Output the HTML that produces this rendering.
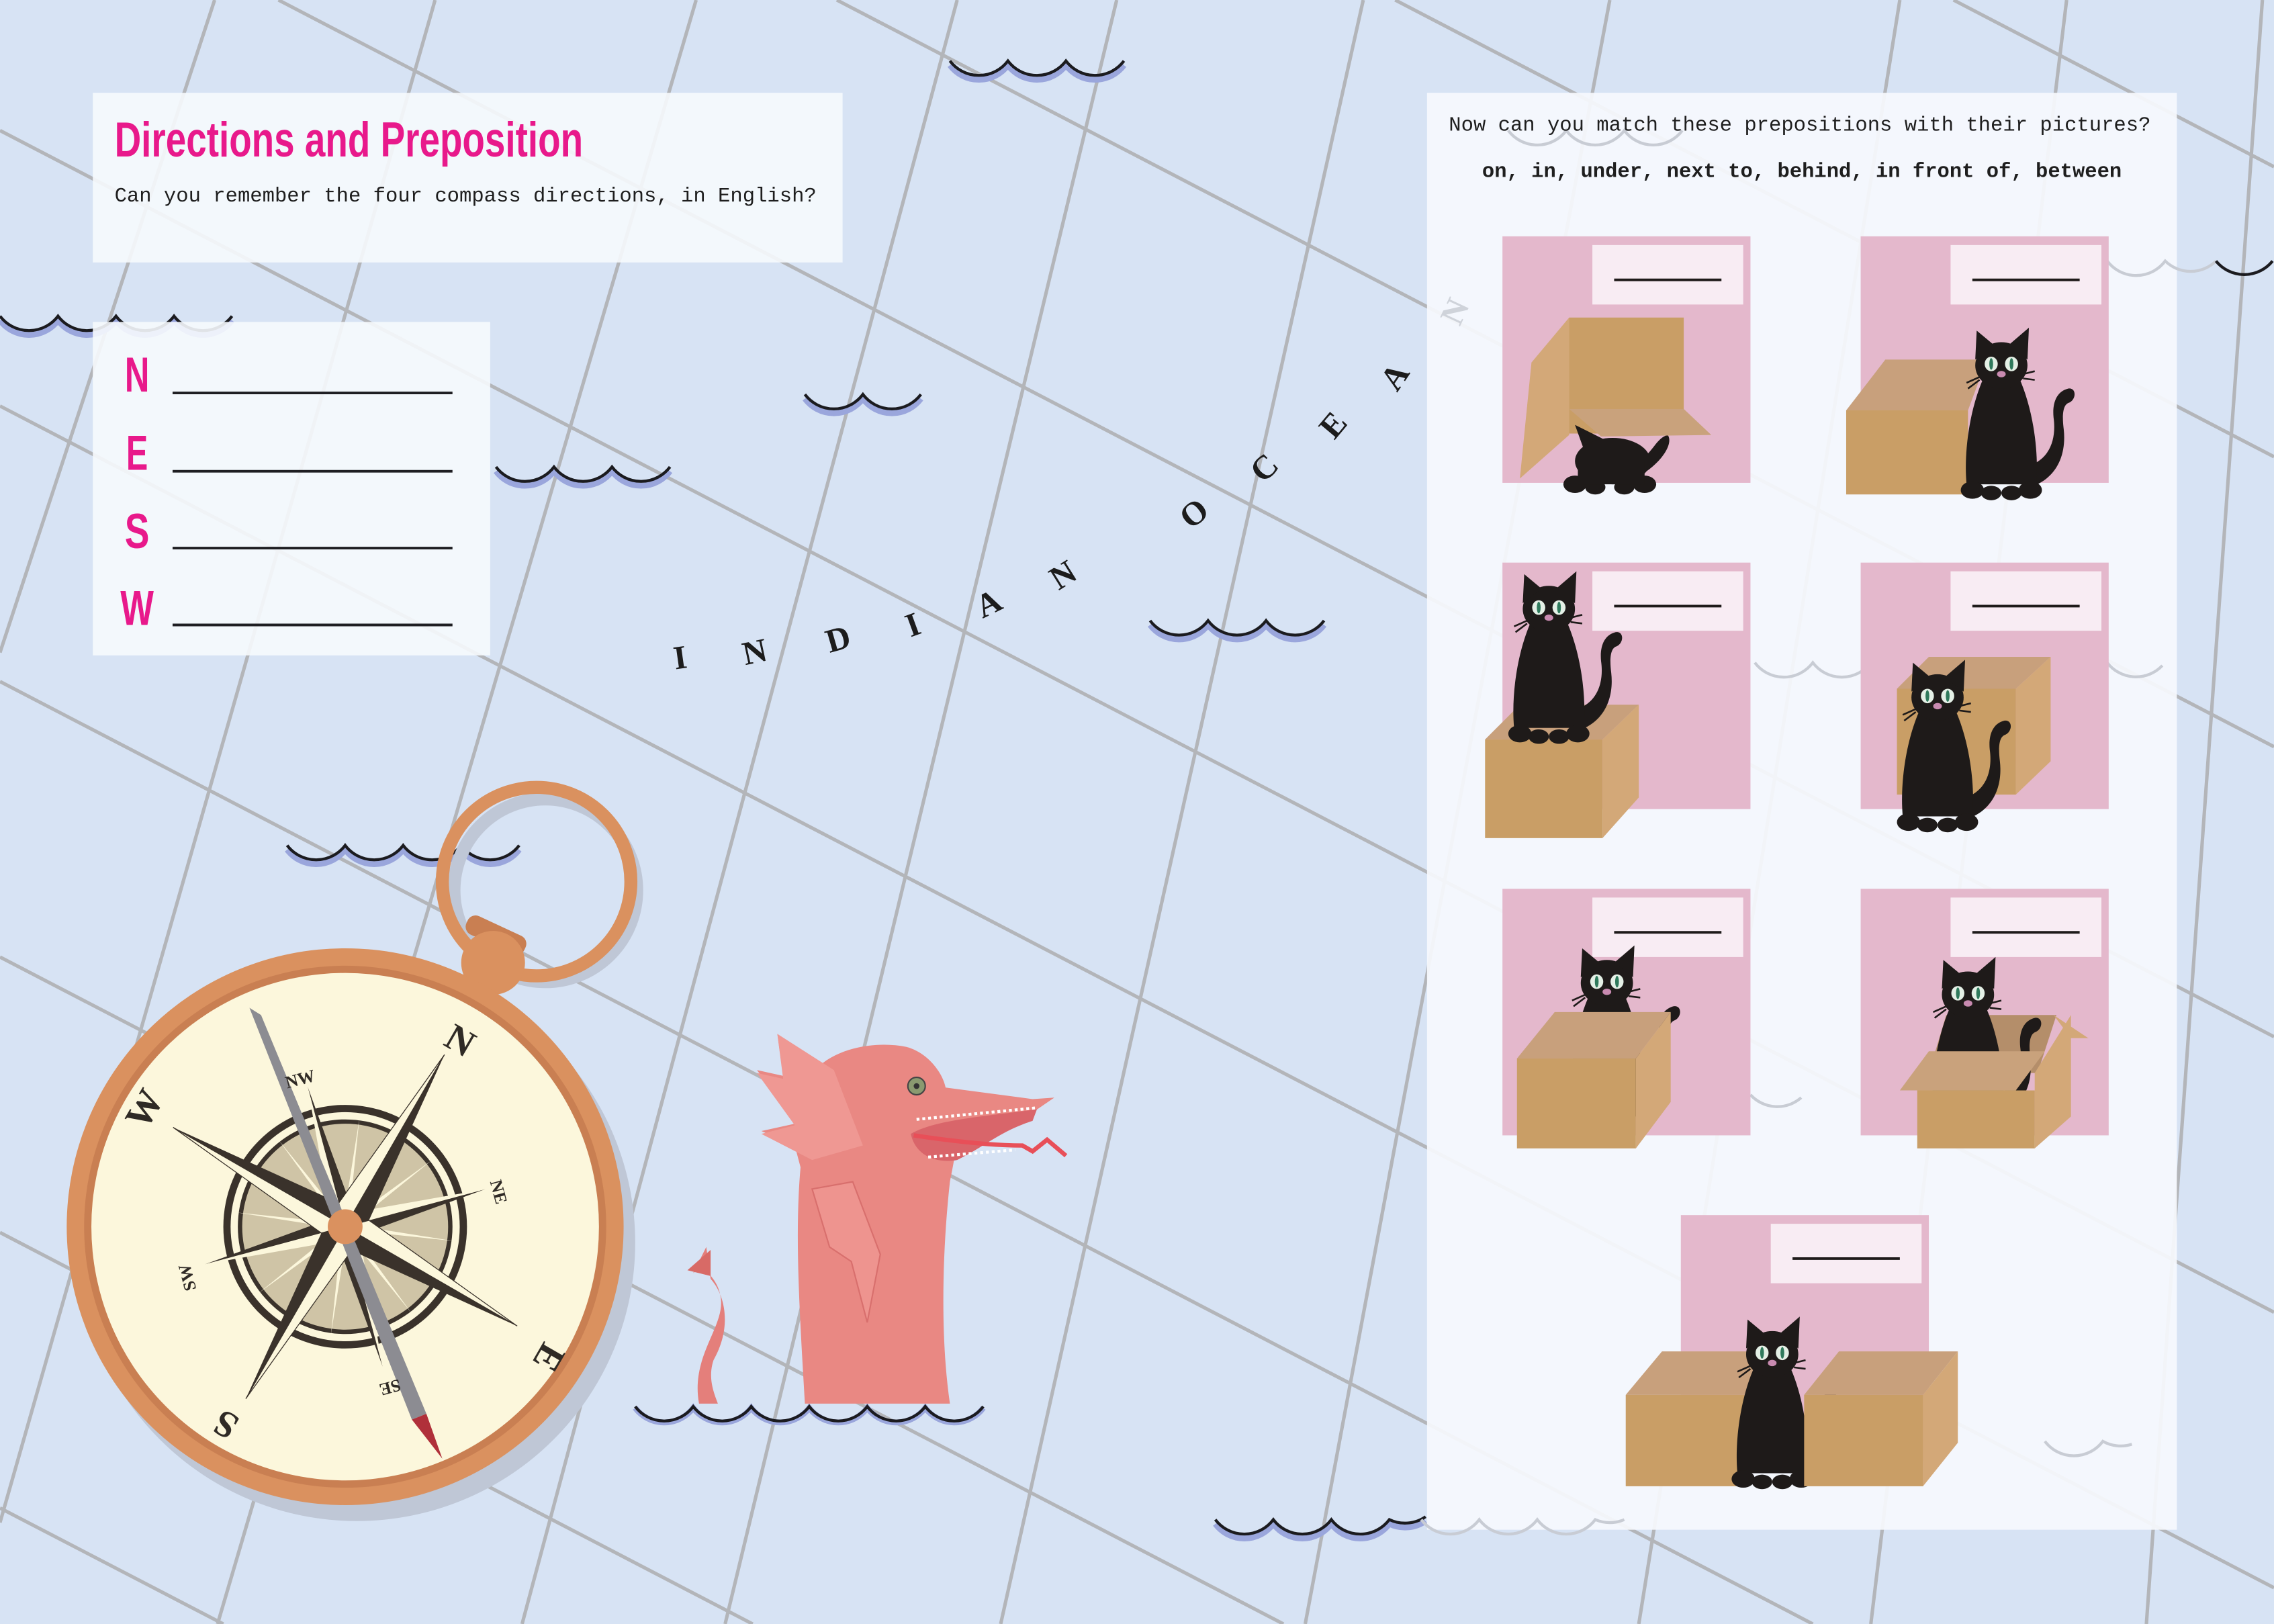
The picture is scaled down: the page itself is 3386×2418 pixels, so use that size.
<!DOCTYPE html>
<html><head><meta charset="utf-8">
<style>
html,body{margin:0;padding:0;background:#d7e3f4;width:3386px;height:2418px;overflow:hidden;}
svg{display:block;position:absolute;left:0;top:0;}
</style></head>
<body>
<svg width="3386" height="2418" viewBox="0 0 1568 1120" preserveAspectRatio="none" xmlns="http://www.w3.org/2000/svg" overflow="hidden">
<defs>
<g id="cat">
  <path d="M16,70 C34,66 38,50 36,36 C35,26 38,18 46,16 C52,15 52,24 46,26 C42,28 42,36 43,44 C45,62 38,78 20,84 Z" fill="#1e1a19"/>
  <path d="M-12,8 C-22,30 -26,60 -24,82 L24,82 C26,60 22,30 12,8 Z" fill="#1e1a19"/>
  <ellipse cx="-20" cy="86" rx="8" ry="6" fill="#1e1a19"/>
  <ellipse cx="-7" cy="88" rx="7" ry="5" fill="#1e1a19"/>
  <ellipse cx="7" cy="88" rx="7" ry="5" fill="#1e1a19"/>
  <ellipse cx="20" cy="86" rx="8" ry="6" fill="#1e1a19"/>
  <ellipse cx="0" cy="0" rx="18" ry="16" fill="#1e1a19"/>
  <polygon points="-18,-4 -17,-24 -5,-14" fill="#1e1a19"/>
  <polygon points="18,-4 19,-26 5,-14" fill="#1e1a19"/>
  <ellipse cx="-7" cy="-1" rx="4.5" ry="5" fill="#e4f0e6"/>
  <ellipse cx="7" cy="-1" rx="4.5" ry="5" fill="#e4f0e6"/>
  <ellipse cx="-7" cy="-1" rx="1.3" ry="4" fill="#2f7a5c"/>
  <ellipse cx="7" cy="-1" rx="1.3" ry="4" fill="#2f7a5c"/>
  <ellipse cx="0" cy="6" rx="3" ry="2.2" fill="#c88ab0"/>
  <g stroke="#1e1a19" stroke-width="1.2"><path d="M-15,8 L-24,12 M-15,10 L-23,16 M15,6 L23,4 M15,9 L23,10"/></g>
</g>
<g id="lbl">
  <rect x="0" y="0" width="104" height="41" fill="#f8ecf3"/>
  <line x1="15" y1="24" x2="89" y2="24" stroke="#1e1a19" stroke-width="1.8"/>
</g>
</defs>

<rect width="1568" height="1120" fill="#d7e3f4"/>

<g stroke="#b3b5b9" stroke-width="2.4" fill="none">
  <line x1="148" y1="0" x2="0" y2="450"/>
  <line x1="300" y1="0" x2="0" y2="1050"/>
  <line x1="480" y1="0" x2="150" y2="1120"/>
  <line x1="660" y1="0" x2="360" y2="1120"/>
  <line x1="770" y1="0" x2="500" y2="1120"/>
  <line x1="940" y1="0" x2="690" y2="1120"/>
  <line x1="1110" y1="0" x2="900" y2="1120"/>
  <line x1="1310" y1="0" x2="1130" y2="1120"/>
  <line x1="1425" y1="0" x2="1290" y2="1120"/>
  <line x1="1560" y1="0" x2="1480" y2="1120"/>
  <line x1="1347" y1="0" x2="1568" y2="115"/>
  <line x1="962" y1="0" x2="1568" y2="315"/>
  <line x1="577" y1="0" x2="1568" y2="515"/>
  <line x1="192" y1="0" x2="1568" y2="715"/>
  <line x1="0" y1="90" x2="1568" y2="905"/>
  <line x1="0" y1="280" x2="1568" y2="1095"/>
  <line x1="0" y1="470" x2="1250" y2="1120"/>
  <line x1="0" y1="660" x2="885" y2="1120"/>
  <line x1="0" y1="850" x2="519" y2="1120"/>
  <line x1="0" y1="1040" x2="154" y2="1120"/>
</g>

<g fill="none">
  <g stroke="#9aa6dc" stroke-width="4" transform="translate(0,3)">
    <path d="M655,42 a25 25 0 0 0 40 0 a25 25 0 0 0 40 0 a25 25 0 0 0 40 0"/>
    <path d="M0,218 a25 25 0 0 0 40 0 a25 25 0 0 0 40 0 a25 25 0 0 0 40 0 a25 25 0 0 0 40 0"/>
    <path d="M555,272 a25 25 0 0 0 40 0 a25 25 0 0 0 40 0"/>
    <path d="M342,322 a25 25 0 0 0 40 0 a25 25 0 0 0 40 0 a25 25 0 0 0 40 0"/>
    <path d="M793,428 a25 25 0 0 0 40 0 a25 25 0 0 0 40 0 a25 25 0 0 0 40 0"/>
    <path d="M198,583 a25 25 0 0 0 40 0 a25 25 0 0 0 40 0 a25 25 0 0 0 40 0 a25 25 0 0 0 40 0"/>
    <path d="M438,968 a25 25 0 0 0 40 0 a25 25 0 0 0 40 0 a25 25 0 0 0 40 0 a25 25 0 0 0 40 0 a25 25 0 0 0 40 0 a25 25 0 0 0 40 0"/>
    <path d="M838,1048 a25 25 0 0 0 40 0 a25 25 0 0 0 40 0 a25 25 0 0 0 40 0 a25 25 0 0 0 25 -2"/>
  </g>
  <g stroke="#1b1b1f" stroke-width="2">
    <path d="M655,42 a25 25 0 0 0 40 0 a25 25 0 0 0 40 0 a25 25 0 0 0 40 0"/>
    <path d="M0,218 a25 25 0 0 0 40 0 a25 25 0 0 0 40 0 a25 25 0 0 0 40 0 a25 25 0 0 0 40 0"/>
    <path d="M555,272 a25 25 0 0 0 40 0 a25 25 0 0 0 40 0"/>
    <path d="M342,322 a25 25 0 0 0 40 0 a25 25 0 0 0 40 0 a25 25 0 0 0 40 0"/>
    <path d="M793,428 a25 25 0 0 0 40 0 a25 25 0 0 0 40 0 a25 25 0 0 0 40 0"/>
    <path d="M198,583 a25 25 0 0 0 40 0 a25 25 0 0 0 40 0 a25 25 0 0 0 40 0 a25 25 0 0 0 40 0"/>
    <path d="M838,1048 a25 25 0 0 0 40 0 a25 25 0 0 0 40 0 a25 25 0 0 0 40 0 a25 25 0 0 0 25 -2"/>
  </g>
</g>

<rect x="64" y="64" width="517" height="117" fill="#f6f9fd" opacity="0.9"/>
<rect x="64" y="222" width="274" height="230" fill="#f6f9fd" opacity="0.9"/>
<text x="79" y="108" font-family="'Liberation Sans Narrow','Liberation Sans',sans-serif" font-weight="bold" font-size="34" fill="#e8198b" textLength="323" lengthAdjust="spacingAndGlyphs">Directions and Preposition</text>
<text x="79" y="139" font-family="'Liberation Mono',monospace" font-size="14" fill="#1e1e1e" textLength="484" lengthAdjust="spacingAndGlyphs">Can you remember the four compass directions, in English?</text>
<g font-family="'Liberation Sans Narrow','Liberation Sans',sans-serif" font-weight="bold" font-size="34" fill="#e8198b">
  <text x="86" y="270" textLength="17" lengthAdjust="spacingAndGlyphs">N</text>
  <text x="87" y="324" textLength="15" lengthAdjust="spacingAndGlyphs">E</text>
  <text x="86" y="378" textLength="17" lengthAdjust="spacingAndGlyphs">S</text>
  <text x="83" y="431" textLength="23" lengthAdjust="spacingAndGlyphs">W</text>
</g>
<g stroke="#1e1e22" stroke-width="1.8">
  <line x1="119" y1="271" x2="312" y2="271"/>
  <line x1="119" y1="325" x2="312" y2="325"/>
  <line x1="119" y1="378" x2="312" y2="378"/>
  <line x1="119" y1="431" x2="312" y2="431"/>
</g>

<g font-family="'Liberation Serif',serif" font-weight="bold" font-size="23" fill="#1c1c1c" text-anchor="middle">
  <text transform="translate(470,461) rotate(-8)">I</text>
  <text transform="translate(522,457) rotate(-12)">N</text>
  <text transform="translate(580,448) rotate(-16)">D</text>
  <text transform="translate(632,438) rotate(-20)">I</text>
  <text transform="translate(685,423) rotate(-26)">A</text>
  <text transform="translate(737,403) rotate(-32)">N</text>
  <text transform="translate(828,360) rotate(-38)">O</text>
  <text transform="translate(877,328) rotate(-44)">C</text>
  <text transform="translate(925,298) rotate(-50)">E</text>
  <text transform="translate(968,264) rotate(-56)">A</text>
</g>

<rect x="984" y="64" width="517" height="991" fill="#f6f9fd" opacity="0.93"/>
<g fill="none" stroke="#c8ccd4" stroke-width="2">
  <path d="M980,1048 a25 25 0 0 0 40 0 a25 25 0 0 0 40 0 a25 25 0 0 0 40 0 a25 25 0 0 0 20 0"/>
  <path d="M1453,180 a25 25 0 0 0 40 0 a25 25 0 0 0 35 0"/>
  <path d="M1210,457 a25 25 0 0 0 40 0 a25 25 0 0 0 40 0"/>
  <path d="M1453,457 a25 25 0 0 0 38 2"/>
  <path d="M1207,755 a25 25 0 0 0 35 2"/>
  <path d="M1410,994 a25 25 0 0 0 40 0 a25 25 0 0 0 20 2"/>
  <path d="M1040,90 a25 25 0 0 0 40 0 a25 25 0 0 0 40 0 a25 25 0 0 0 40 0"/>
</g>
<path d="M1528,180 a25 25 0 0 0 39 0" fill="none" stroke="#1b1b1f" stroke-width="2"/>
<text transform="translate(1010,218) rotate(-65)" font-family="'Liberation Serif',serif" font-weight="bold" font-size="23" fill="#cfd3da" text-anchor="middle">N</text>
<text x="999" y="90" font-family="'Liberation Mono',monospace" font-size="14" fill="#1e1e1e" textLength="484" lengthAdjust="spacingAndGlyphs">Now can you match these prepositions with their pictures?</text>
<text x="1022" y="122" font-family="'Liberation Mono',monospace" font-weight="bold" font-size="14" fill="#1e1e1e" textLength="441" lengthAdjust="spacingAndGlyphs">on, in, under, next to, behind, in front of, between</text>

<g fill="#e4b8cc">
  <rect x="1036" y="163" width="171" height="170"/>
  <rect x="1283" y="163" width="171" height="170"/>
  <rect x="1036" y="388" width="171" height="170"/>
  <rect x="1283" y="388" width="171" height="170"/>
  <rect x="1036" y="613" width="171" height="170"/>
  <rect x="1283" y="613" width="171" height="170"/>
  <rect x="1159" y="838" width="171" height="170"/>
</g>
<use href="#lbl" x="1098" y="169"/>
<use href="#lbl" x="1345" y="169"/>
<use href="#lbl" x="1098" y="394"/>
<use href="#lbl" x="1345" y="394"/>
<use href="#lbl" x="1098" y="619"/>
<use href="#lbl" x="1345" y="619"/>
<use href="#lbl" x="1221" y="844"/>

<polygon points="1056,250 1082,219 1082,300 1048,330" fill="#d3a878"/>
<rect x="1082" y="219" width="79" height="80" fill="#c99e66"/>
<g fill="#1e1a19">
  <polygon points="1086,293 1095,318 1110,305"/>
  <ellipse cx="1112" cy="318" rx="26" ry="16"/>
  <path d="M1130,318 C1140,312 1142,302 1150,300 C1154,306 1146,318 1134,326 Z"/>
  <ellipse cx="1086" cy="334" rx="8" ry="6"/><ellipse cx="1100" cy="336" rx="7" ry="5"/>
  <ellipse cx="1120" cy="336" rx="7" ry="5"/><ellipse cx="1134" cy="334" rx="8" ry="6"/>
  <rect x="1088" y="318" width="46" height="16"/>
</g>
<polygon points="1082,282 1161,282 1180,300 1104,301" fill="#c9a27c"/>

<polygon points="1273,283 1300,248 1370,248 1357,283" fill="#c8a07c"/>
<rect x="1273" y="283" width="84" height="58" fill="#c99e66"/>
<use href="#cat" x="1380" y="252"/>

<polygon points="1024,510 1048,486 1130,486 1105,510" fill="#c8a07c"/>
<polygon points="1105,510 1130,486 1130,550 1105,578" fill="#d3a878"/>
<rect x="1024" y="510" width="81" height="68" fill="#c99e66"/>
<use href="#cat" x="1068" y="420"/>

<polygon points="1308,475 1330,453 1414,453 1390,475" fill="#c8a07c"/>
<polygon points="1390,475 1414,453 1414,525 1390,548" fill="#d3a878"/>
<rect x="1308" y="475" width="82" height="73" fill="#c99e66"/>
<use href="#cat" x="1336" y="481"/>

<use href="#cat" x="1108" y="678"/>
<polygon points="1046,730 1072,698 1152,698 1128,730" fill="#c8a07c"/>
<polygon points="1128,730 1152,698 1152,760 1128,792" fill="#d3a878"/>
<rect x="1046" y="730" width="82" height="62" fill="#c99e66"/>

<polygon points="1330,740 1342,700 1418,700 1405,740" fill="#b48e6a"/>
<use href="#cat" x="1357" y="686"/>
<polygon points="1403,740 1428,700 1428,770 1403,792" fill="#d3a878"/>
<polygon points="1416,700 1440,716 1428,716" fill="#d3a878"/>
<polygon points="1310,752 1330,725 1410,725 1390,752" fill="#c9a27c"/>
<rect x="1322" y="752" width="81" height="40" fill="#c99e66"/>

<polygon points="1121,962 1146,932 1228,932 1203,962" fill="#c8a07c"/>
<rect x="1121" y="962" width="82" height="63" fill="#c99e66"/>
<use href="#cat" x="1222" y="934"/>
<polygon points="1244,962 1268,932 1350,932 1326,962" fill="#c8a07c"/>
<polygon points="1326,962 1350,932 1350,995 1326,1025" fill="#d3a878"/>
<rect x="1244" y="962" width="82" height="63" fill="#c99e66"/>

<circle cx="376" cy="614" r="63" fill="none" stroke="#bfc7d6" stroke-width="9"/>
<circle cx="370" cy="608" r="65" fill="none" stroke="#da915f" stroke-width="9"/>
<circle cx="246" cy="857" r="192" fill="#bfc7d6"/>
<rect x="320" y="638" width="44" height="14" rx="6" fill="#c97f52" transform="rotate(25 342 645)"/>
<circle cx="340" cy="664" r="22" fill="#da915f"/>
<circle cx="238" cy="846" r="192" fill="#da915f"/>
<circle cx="238" cy="846" r="180" fill="#c97f52"/>
<circle cx="238" cy="846" r="175" fill="#fcf7dc"/>
<g transform="translate(238,846)">
  <circle r="84" fill="#3a322b"/>
  <circle r="79" fill="#fcf7dc"/>
  <circle r="74" fill="#3a322b"/>
  <circle r="71" fill="#cfc4a6"/>
  <g transform="rotate(30)">
    <g>
      <polygon points="0,-75 2,0 -2,0" fill="#fcf7dc" transform="rotate(22.5)"/>
      <polygon points="0,-75 2,0 -2,0" fill="#fcf7dc" transform="rotate(67.5)"/>
      <polygon points="0,-75 2,0 -2,0" fill="#fcf7dc" transform="rotate(112.5)"/>
      <polygon points="0,-75 2,0 -2,0" fill="#fcf7dc" transform="rotate(157.5)"/>
      <polygon points="0,-75 2,0 -2,0" fill="#fcf7dc" transform="rotate(202.5)"/>
      <polygon points="0,-75 2,0 -2,0" fill="#fcf7dc" transform="rotate(247.5)"/>
      <polygon points="0,-75 2,0 -2,0" fill="#fcf7dc" transform="rotate(292.5)"/>
      <polygon points="0,-75 2,0 -2,0" fill="#fcf7dc" transform="rotate(337.5)"/>
    </g>
    <g>
      <g transform="rotate(45)"><polygon points="0,-100 8,-8 0,0" fill="#3a322b"/><polygon points="0,-100 -8,-8 0,0" fill="#fcf7dc"/></g>
      <g transform="rotate(135)"><polygon points="0,-100 8,-8 0,0" fill="#3a322b"/><polygon points="0,-100 -8,-8 0,0" fill="#fcf7dc"/></g>
      <g transform="rotate(225)"><polygon points="0,-100 8,-8 0,0" fill="#3a322b"/><polygon points="0,-100 -8,-8 0,0" fill="#fcf7dc"/></g>
      <g transform="rotate(315)"><polygon points="0,-100 8,-8 0,0" fill="#3a322b"/><polygon points="0,-100 -8,-8 0,0" fill="#fcf7dc"/></g>
    </g>
    <g>
      <g><polygon points="0,-137 12,-12 0,0" fill="#3a322b"/><polygon points="0,-137 -12,-12 0,0" fill="#fcf7dc" stroke="#3a322b" stroke-width="0.6"/></g>
      <g transform="rotate(90)"><polygon points="0,-137 12,-12 0,0" fill="#3a322b"/><polygon points="0,-137 -12,-12 0,0" fill="#fcf7dc" stroke="#3a322b" stroke-width="0.6"/></g>
      <g transform="rotate(180)"><polygon points="0,-137 12,-12 0,0" fill="#3a322b"/><polygon points="0,-137 -12,-12 0,0" fill="#fcf7dc" stroke="#3a322b" stroke-width="0.6"/></g>
      <g transform="rotate(270)"><polygon points="0,-137 12,-12 0,0" fill="#3a322b"/><polygon points="0,-137 -12,-12 0,0" fill="#fcf7dc" stroke="#3a322b" stroke-width="0.6"/></g>
    </g>
  </g>
</g>
<polygon points="172,695 180,700 294,975 284,979" fill="#8c8c92"/>
<polygon points="284,979 294,975 305,1006" fill="#b0303a"/>
<circle cx="238" cy="846" r="12" fill="#da915f"/>
<g font-family="'Liberation Serif',serif" font-weight="bold" fill="#2f2a25" text-anchor="middle">
  <text font-size="26" transform="translate(313,725) rotate(30)">N</text>
  <text font-size="26" transform="translate(371,932) rotate(120)">E</text>
  <text font-size="26" transform="translate(160,975) rotate(210)">S</text>
  <text font-size="26" transform="translate(107,769) rotate(300)">W</text>
  <text font-size="12" transform="translate(208,748) rotate(-15)">NW</text>
  <text font-size="12" transform="translate(340,823) rotate(75)">NE</text>
  <text font-size="12" transform="translate(268,953) rotate(165)">SE</text>
  <text font-size="12" transform="translate(133,880) rotate(255)">SW</text>
</g>

<g>
  <path d="M482,968 C476,935 500,915 497,895 C495,882 487,878 485,873 L478,878 L487,860 L490,882 C500,893 505,915 492,938 C488,950 492,960 495,968 Z" fill="#e47f7b"/>
  <polygon points="474,876 490,862 490,880" fill="#d86a66"/>
  <path d="M555,968 C551,900 548,850 552,805 L548,790 L525,780 L548,775 L522,738 L540,742 L536,713 L565,735 C580,722 605,718 625,722 C640,726 650,740 652,750 L712,758 L727,757 L705,772 L660,775 C660,790 658,800 655,815 C650,860 648,920 655,968 Z" fill="#e98883"/>
  <path d="M536,713 L575,738 L595,790 L560,800 L525,782 L548,776 L522,740 L540,744 Z" fill="#ef9893"/>
  <path d="M560,820 L588,815 L607,865 L598,912 L587,870 L572,860 Z" fill="#f09893" opacity="0.8" stroke="#d56a68" stroke-width="1"/>
  <path d="M628,782 C645,772 680,770 715,765 L712,773 C690,780 680,790 660,800 C650,802 632,800 628,782 Z" fill="#d9656a"/>
  <path d="M630,783 C650,786 680,790 705,790 L712,794 L722,786 L735,797" fill="none" stroke="#e84f58" stroke-width="3"/>
  <path d="M632,772 L715,764" stroke="#ffffff" stroke-width="2" stroke-dasharray="2 2"/>
  <path d="M640,798 L700,793" stroke="#ffffff" stroke-width="2" stroke-dasharray="2 2"/>
  <circle cx="632" cy="749" r="6" fill="#8a9a70" stroke="#444" stroke-width="1"/>
  <circle cx="632" cy="749" r="2" fill="#333"/>
</g>
<path d="M438,970 a25 25 0 0 0 40 0 a25 25 0 0 0 40 0 a25 25 0 0 0 40 0 a25 25 0 0 0 40 0 a25 25 0 0 0 40 0 a25 25 0 0 0 40 0" fill="none" stroke="#1b1b1f" stroke-width="2"/>
</svg>
</body></html>
